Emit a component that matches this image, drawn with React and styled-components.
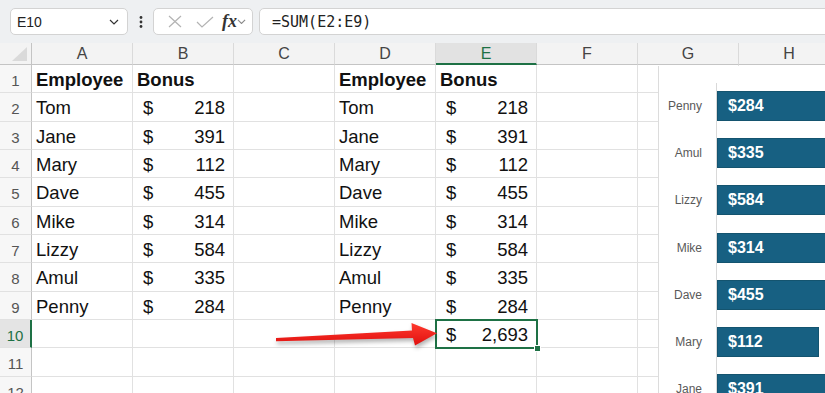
import React from "react";
import styled, { createGlobalStyle } from "styled-components";

const GlobalStyle = createGlobalStyle`
  html, body {
    margin: 0;
    background: #fff;
    overflow: hidden;
  }
  body {
    font-family: "Liberation Sans", Arial, sans-serif;
  }
`;

const GREEN = "#1e7145";
const GRID = "#e1e1e1";
const HEAD_LINE = "#c4c4c4";

const Page = styled.div`
  position: relative;
  width: 825px;
  height: 393px;
  overflow: hidden;
  display: flex;
  flex-direction: column;
`;

const Toolbar = styled.div`
  height: 43px;
  flex: none;
  box-sizing: border-box;
  padding: 8px 0 0 10px;
  background: #eef0f2;
  display: flex;
  align-items: flex-start;
`;

const Box = styled.div`
  height: 27px;
  box-sizing: border-box;
  border: 1px solid #d3d3d3;
  border-radius: 5px;
  background: #fff;
  display: flex;
  align-items: center;
`;

const NameBox = styled(Box)`
  width: 118px;
  justify-content: space-between;
  padding: 0 8px 0 6px;
  font-size: 14px;
  color: #222;
`;

const Dots = styled.div`
  width: 25px;
  height: 27px;
  display: flex;
  align-items: center;
  justify-content: center;
`;

const FxBox = styled(Box)`
  width: 100px;
  padding: 0 0 0 6px;
`;

const FxIcon = styled.span`
  width: 30px;
  display: flex;
  justify-content: center;
`;

const FxText = styled.span`
  font-family: "Liberation Serif", "Times New Roman", serif;
  font-style: italic;
  font-weight: bold;
  font-size: 18px;
  color: #333;
  margin-left: 2px;
`;

const FormulaBox = styled(Box)`
  flex: 1;
  margin: 0 -8px 0 6px;
  padding-left: 12px;
  font-family: "DejaVu Sans Mono", "Liberation Mono", monospace;
  font-size: 15px;
  color: #222;
`;

const SheetArea = styled.div`
  position: relative;
  flex: 1;
  overflow: hidden;
  background: #fff;
`;

const Grid = styled.div`
  display: grid;
  grid-template-columns: 32px repeat(8, 101px);
  grid-template-rows: 22px repeat(12, 28.33px);
`;

const Corner = styled.div`
  position: relative;
  background: #f3f3f3;
  border-right: 1px solid ${HEAD_LINE};
  border-bottom: 1px solid ${HEAD_LINE};

  &::after {
    content: "";
    position: absolute;
    right: 4px;
    bottom: 3px;
    width: 15px;
    height: 14px;
    background: #dadada;
    clip-path: polygon(100% 0, 100% 100%, 0 100%);
  }
`;

const ColHeader = styled.div`
  box-sizing: border-box;
  background: ${p => (p.$active ? "#e2e2e2" : "#f3f3f3")};
  border-right: 1px solid #dadada;
  border-bottom: ${p => (p.$active ? `2px solid ${GREEN}` : `1px solid ${HEAD_LINE}`)};
  text-align: center;
  font-size: 16px;
  line-height: 21px;
  color: ${p => (p.$active ? GREEN : "#444")};
`;

const RowHeader = styled.div`
  box-sizing: border-box;
  background: ${p => (p.$active ? "#e4e4e4" : "#f7f7f7")};
  border-right: ${p => (p.$active ? `2px solid ${GREEN}` : `1px solid ${HEAD_LINE}`)};
  border-bottom: 1px solid ${GRID};
  text-align: center;
  padding-top: 3px;
  font-size: 15px;
  line-height: 25px;
  color: ${p => (p.$active ? GREEN : "#555")};
  overflow: hidden;
`;

const Cell = styled.div`
  position: relative;
  box-sizing: border-box;
  border-right: 1px solid ${GRID};
  border-bottom: 1px solid ${GRID};
  padding: 1px 8px 0 4px;
  font-size: 18.5px;
  line-height: 27px;
  font-weight: ${p => (p.$bold ? "bold" : "normal")};
  color: #111;
  white-space: nowrap;

  ${p =>
    p.$selected &&
    `
    outline: 2px solid ${GREEN};
    outline-offset: -1px;
    z-index: 1;

    &::after {
      content: "";
      position: absolute;
      right: -5px;
      bottom: -5px;
      width: 5px;
      height: 5px;
      background: ${GREEN};
      border: 1px solid #fff;
    }
  `}
`;

const Money = styled(Cell)`
  display: flex;
  justify-content: space-between;
  padding-left: 10px;
`;

const Chart = styled.div`
  position: absolute;
  top: 23px;
  left: 658px;
  right: 0;
  bottom: 0;
  background: #fff;
  border-left: 1px solid #dcdcdc;
  padding-top: 17px;
  z-index: 3;
`;

const ChartRow = styled.div`
  display: flex;
  height: 47.2px;
`;

const ChartLabel = styled.div`
  flex: none;
  width: 57px;
  box-sizing: border-box;
  padding: 8px 14px 0 0;
  text-align: right;
  font-size: 12px;
  line-height: 30px;
  color: #595959;
`;

const Track = styled.div`
  flex: 1;
  min-width: 0;
  overflow: hidden;
  border-left: 1px solid #d9d9d9;
  padding-top: 8px;
`;

const Bar = styled.div`
  height: 30px;
  box-sizing: border-box;
  background: #176082;
  box-shadow: inset 0 0 0 1px #14546f;
  color: #fff;
  font-weight: bold;
  font-size: 16px;
  line-height: 30px;
  padding-left: 11px;
  white-space: nowrap;
`;

const ArrowSvg = styled.svg`
  position: absolute;
  left: 270px;
  top: 318px;
  overflow: visible;
  z-index: 4;
  filter: drop-shadow(1px 3px 2px rgba(0, 0, 0, 0.3));
`;

const Chevron = ({ color = "#444", size = 10 }) => (
  <svg width={size} height={size * 0.6} viewBox="0 0 10 6">
    <path d="M1 1l4 4 4-4" fill="none" stroke={color} strokeWidth="1.2" />
  </svg>
);

const COLS = ["A", "B", "C", "D", "E", "F", "G", "H"];

const people = [
  ["Tom", 218],
  ["Jane", 391],
  ["Mary", 112],
  ["Dave", 455],
  ["Mike", 314],
  ["Lizzy", 584],
  ["Amul", 335],
  ["Penny", 284]
];

// chart lists the same people, bottom row first
const chartData = [...people].reverse();

const renderCell = (row, col) => {
  const key = `${col}${row}`;
  if (col === "A" || col === "D") {
    if (row === 1) return <Cell key={key} $bold>Employee</Cell>;
    if (row <= 9) return <Cell key={key}>{people[row - 2][0]}</Cell>;
  }
  if (col === "B" || col === "E") {
    if (row === 1) return <Cell key={key} $bold>Bonus</Cell>;
    if (row <= 9)
      return (
        <Money key={key}>
          <span>$</span>
          <span>{people[row - 2][1]}</span>
        </Money>
      );
    if (key === "E10")
      return (
        <Money key={key} $selected>
          <span>$</span>
          <span>2,693</span>
        </Money>
      );
  }
  return <Cell key={key} />;
};

const App = () => {
  const rows = Array.from({ length: 12 }, (_, i) => i + 1);
  return (
    <Page>
      <GlobalStyle />
      <Toolbar>
        <NameBox>
          <span>E10</span>
          <Chevron color="#333" />
        </NameBox>
        <Dots>
          <svg width="4" height="12" viewBox="0 0 4 12">
            <circle cx="2" cy="1.5" r="1.4" fill="#333" />
            <circle cx="2" cy="6" r="1.4" fill="#333" />
            <circle cx="2" cy="10.5" r="1.4" fill="#333" />
          </svg>
        </Dots>
        <FxBox>
          <FxIcon>
            <svg width="14" height="13" viewBox="0 0 14 13">
              <path d="M1 1l12 11M13 1L1 12" stroke="#b3b3b3" strokeWidth="1.2" />
            </svg>
          </FxIcon>
          <FxIcon>
            <svg width="18" height="12" viewBox="0 0 18 12">
              <path d="M1 6l5 5L17 1" fill="none" stroke="#b3b3b3" strokeWidth="1.2" />
            </svg>
          </FxIcon>
          <FxText>fx</FxText>
          <Chevron color="#888" size={9} />
        </FxBox>
        <FormulaBox>=SUM(E2:E9)</FormulaBox>
      </Toolbar>
      <SheetArea>
        <Grid>
          <Corner />
          {COLS.map(c => (
            <ColHeader key={c} $active={c === "E"}>
              {c}
            </ColHeader>
          ))}
          {rows.map(r => (
            <React.Fragment key={r}>
              <RowHeader $active={r === 10}>{r}</RowHeader>
              {COLS.map(c => renderCell(r, c))}
            </React.Fragment>
          ))}
        </Grid>
        <Chart>
          {chartData.map(([name, value]) => (
            <ChartRow key={name}>
              <ChartLabel>{name}</ChartLabel>
              <Track>
                <Bar style={{ width: `${Math.round(value * 0.91)}px` }}>${value}</Bar>
              </Track>
            </ChartRow>
          ))}
        </Chart>
      </SheetArea>
      <ArrowSvg width="175" height="35" viewBox="0 0 175 35">
        <defs>
          <linearGradient id="red" x1="0" y1="0" x2="0" y2="1">
            <stop offset="0" stopColor="#ff3a2e" />
            <stop offset="1" stopColor="#e0100f" />
          </linearGradient>
        </defs>
        <polygon
          points="6,20 142,12.5 141.5,5 167,15.3 145,27.5 143,20 6,23.3"
          fill="url(#red)"
        />
      </ArrowSvg>
    </Page>
  );
};

export default App;
